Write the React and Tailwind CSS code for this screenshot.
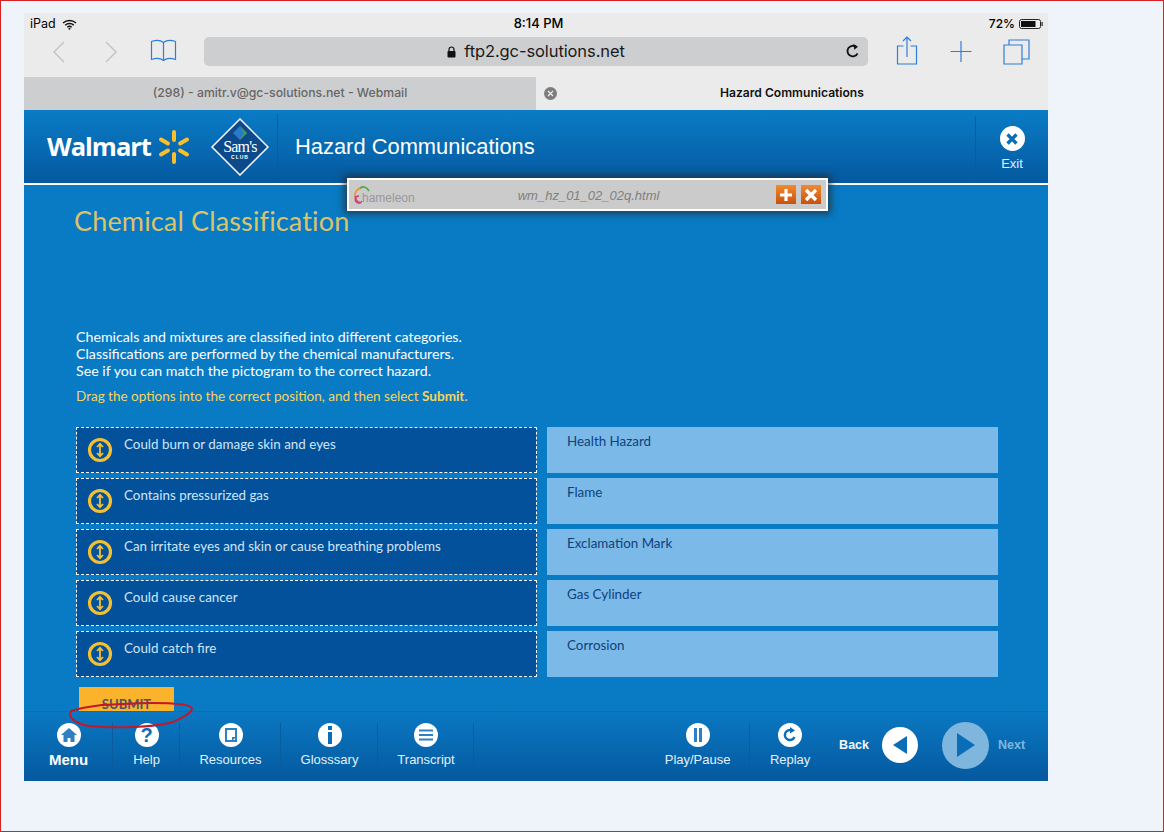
import React from 'react';

const rows = [
  ['Could burn or damage skin and eyes', 'Health Hazard'],
  ['Contains pressurized gas', 'Flame'],
  ['Can irritate eyes and skin or cause breathing problems', 'Exclamation Mark'],
  ['Could cause cancer', 'Gas Cylinder'],
  ['Could catch fire', 'Corrosion'],
];

function DragIcon() {
  return (
    <svg width="26" height="26" viewBox="0 0 26 26" className="shrink-0">
      <circle cx="13" cy="13" r="10.5" fill="none" stroke="#f4c033" strokeWidth="3.2" />
      <path d="M13 7.5v11M10 10l3-3.2 3 3.2M10 16l3 3.2 3-3.2" fill="none" stroke="#f4c033" strokeWidth="1.8" />
    </svg>
  );
}

function NavItem({ label, className, bold, children }) {
  return (
    <div className={`flex flex-col items-center border-r border-[#0a5c9f] h-[48px] pl-[1px] ${className}`}>
      <div className="h-[24px] w-[24px] rounded-full bg-white flex items-center justify-center">{children}</div>
      <span className={bold ? 'text-[15px] font-bold text-white mt-[3px] leading-[20px]' : 'text-[13px] text-[#e3f0fa] mt-[3px] leading-[20px]'}>{label}</span>
    </div>
  );
}

function Toolbar() {
  return (
    <div className="bg-[#ebebeb] h-[64px] relative text-black">
      <div className="flex items-center justify-between h-[21px] pt-[1px] pl-[6px] pr-[5px] text-[12.5px] font-['Inter',sans-serif]">
        <div className="flex items-center gap-[6px] w-[200px]">
          <span>iPad</span>
          <svg width="15" height="11" viewBox="0 0 15 11">
            <path d="M1 4a9.5 9.5 0 0 1 13 0M3.2 6.2a6.3 6.3 0 0 1 8.6 0M5.3 8.2a3.3 3.3 0 0 1 4.4 0" fill="none" stroke="#111" strokeWidth="1.5" />
            <circle cx="7.5" cy="9.8" r="1" fill="#111" />
          </svg>
        </div>
        <span className="font-medium text-[13px] pl-[4px]">8:14 PM</span>
        <div className="flex items-center justify-end gap-[4px] w-[200px]">
          <span className="font-medium text-[12px]">72%</span>
          <svg width="24" height="10" viewBox="0 0 24 10">
            <rect x="0.5" y="0.5" width="21" height="9" rx="2" fill="none" stroke="#222" />
            <rect x="2" y="2" width="14.5" height="6" fill="#111" />
            <rect x="22.5" y="3" width="1.2" height="4" fill="#222" />
          </svg>
        </div>
      </div>
      <div className="flex items-center h-[30px] mt-[3px]">
        <svg width="180" height="30" viewBox="0 0 180 30" className="shrink-0">
          <path d="M40 5 30 15l10 10" fill="none" stroke="#c2c2c4" strokeWidth="1.4" />
          <path d="M82 5l10 10-10 10" fill="none" stroke="#c2c2c4" strokeWidth="1.4" />
          <path d="M140 6c-3-2.500-8-2.500-12-1v18c4-1.500 9-1.500 12 1 3-2.500 8-2.500 12-1V5c-4-1.500-9-1.500-12 1zM140 6v18" transform="translate(-.5 -.5)" fill="none" stroke="#2f7fd6" strokeWidth="1.2" />
        </svg>
        <div className="w-[664px] h-[29px] -mt-[1px] rounded-[5px] bg-[#cdced0] flex items-center relative">
          <div className="flex-1 flex items-center justify-center gap-[8px] text-[16.5px] text-[#1a1a1a] font-['Inter',sans-serif] tracking-[-0.1px]">
            <svg width="9" height="12" viewBox="0 0 9 12">
              <path d="M2 5V3.500a2.500 2.500 0 0 1 5 0V5" fill="none" stroke="#111" strokeWidth="1.200" />
              <rect x="0.500" y="5" width="8" height="6.500" rx="1" fill="#111" />
            </svg>
            <span>ftp2.gc-solutions.net</span>
          </div>
          <svg width="16" height="16" viewBox="0 0 16 16" className="absolute right-[7px] top-[6px]">
            <path d="M12.500 10.500A5.300 5.300 0 1 1 11 3.800" fill="none" stroke="#111" strokeWidth="1.800" />
            <path d="M8.500 1l4.500 2.800-3.800 3z" fill="#111" />
          </svg>
        </div>
        <svg width="180" height="36" viewBox="0 0 180 36" className="shrink-0 -mt-[2px]">
          <g fill="none" stroke="#2f7fd6" strokeWidth="1.200">
            <path d="M35.500 13H29.500v18h19V13H42.500M39 24V4M35 8l4-4 4 4" />
            <path d="M93 8v21M82.500 18.500h21" />
            <path d="M136 12.500h18v19h-18zM141 12.500V7.500h20v19h-7" transform="translate(0 -.5)" />
          </g>
        </svg>
      </div>
    </div>
  );
}

function Tabs() {
  return (
    <div className="flex h-[33px] font-['Inter',sans-serif]">
      <div className="w-[512px] bg-[#cdced0] flex items-center justify-center text-[12.25px] text-[#666] font-medium">
        (298) - amitr.v@gc-solutions.net - Webmail
      </div>
      <div className="flex-1 bg-[#ebebeb] flex items-center">
        <div className="ml-[8px] w-[13px] h-[13px] rounded-full bg-[#7d7d7d] flex items-center justify-center">
          <svg width="7" height="7" viewBox="0 0 7 7"><path d="M1 1l5 5M6 1 1 6" stroke="#eee" strokeWidth="1.200" /></svg>
        </div>
        <span className="flex-1 text-center text-[12.1px] font-semibold text-[#111] -ml-[21px]">Hazard Communications</span>
      </div>
    </div>
  );
}

function Header() {
  return (
    <div className="h-[75px] bg-gradient-to-b from-[#0a7cc6] to-[#05599f] border-b-2 border-white flex text-white">
      <div className="flex flex-1 items-center pb-[5px]">
        <div className="flex items-center w-[254px] h-[66px] border-r border-[#0a5c9f] mt-[6px] pl-[23px]">
          <span className="text-[25.5px] font-bold tracking-[-1px] font-['Open_Sans',sans-serif] leading-none">Walmart</span>
          <svg width="36" height="36" viewBox="0 0 36 36" className="ml-[5px] shrink-0">
            <g fill="#fbbf2e">
              <rect x="16" y="1" width="4" height="12" rx="2" />
              <rect x="16" y="23" width="4" height="12" rx="2" />
              <rect x="16" y="1" width="4" height="12" rx="2" transform="rotate(60 18 18)" />
              <rect x="16" y="1" width="4" height="12" rx="2" transform="rotate(120 18 18)" />
              <rect x="16" y="1" width="4" height="12" rx="2" transform="rotate(240 18 18)" />
              <rect x="16" y="1" width="4" height="12" rx="2" transform="rotate(300 18 18)" />
            </g>
          </svg>
          <svg width="58" height="58" viewBox="0 0 58 58" className="ml-[19px] shrink-0">
            <path d="M29 1 57 29 29 57 1 29z" fill="#0c4a8c" stroke="#fff" strokeWidth="1.500" />
            <path d="M29 8l7 7-7 7-7-7z" fill="#2a78c8" />
            <path d="M29 8l7 7-7 7 3.500-7z" fill="#3f9a52" />
            <text x="29" y="34" textAnchor="middle" fill="#fff" fontSize="16" fontFamily="Liberation Serif, serif" letterSpacing="-0.8">Sam's</text>
            <text x="29" y="41" textAnchor="middle" fill="#fff" fontSize="5" fontWeight="700" fontFamily="Liberation Sans, sans-serif" letterSpacing="1">CLUB</text>
          </svg>
        </div>
        <span className="ml-[17px] text-[21.9px] font-['Liberation_Sans',sans-serif] mt-[6px]">Hazard Communications</span>
      </div>
      <div className="w-[73px] h-[66px] mt-[6px] border-l border-[#0a5c9f] flex flex-col items-center pt-[10px] font-['Liberation_Sans',sans-serif]">
        <div className="w-[25px] h-[25px] rounded-full bg-white flex items-center justify-center">
          <svg width="14" height="14" viewBox="0 0 14 14"><path d="M2.500 2.500l9 9M11.500 2.500l-9 9" stroke="#0a6db8" strokeWidth="3.200" /></svg>
        </div>
        <span className="text-[13px] mt-[3px] text-[#e3f0fa]">Exit</span>
      </div>
    </div>
  );
}

function Popup() {
  return (
    <div className="absolute left-[346px] top-[177px] w-[481px] h-[33px] bg-[#cbcbcb] border-2 border-white shadow-[0_0_7px_3px_rgba(40,40,40,0.7)] flex items-center font-['Liberation_Sans',sans-serif]">
      <svg width="20" height="22" viewBox="0 0 20 22" className="ml-[3px] shrink-0">
        <path d="M9 4a7.500 7.500 0 0 0-6 8" fill="none" stroke="#e89a3a" strokeWidth="1.800" />
        <path d="M3 12a8 8 0 0 0 6 7" fill="none" stroke="#e0604a" strokeWidth="1.800" />
        <path d="M8 4c3-2 7-1 9 3" fill="none" stroke="#57a85a" strokeWidth="1.800" />
        <path d="M10 17a3.500 3.500 0 1 1-3-5" fill="none" stroke="#c4388a" strokeWidth="1.300" />
      </svg>
      <span className="text-[12px] text-[#999] -ml-[10px] mt-[6px]">hameleon</span>
      <span className="ml-[103px] text-[13px] italic text-[#808080] mt-[3px]">wm_hz_01_02_02q.html</span>
      <div className="ml-auto mr-[5px] flex gap-[5px]">
        <div className="w-[20px] h-[19px] bg-gradient-to-b from-[#f28a2c] to-[#c8500f] flex items-center justify-center">
          <svg width="14" height="14" viewBox="0 0 14 14"><path d="M7 1v12M1 7h12" stroke="#fff" strokeWidth="3.200" /></svg>
        </div>
        <div className="w-[20px] h-[19px] bg-gradient-to-b from-[#f28a2c] to-[#c8500f] flex items-center justify-center">
          <svg width="14" height="14" viewBox="0 0 14 14"><path d="M2 2l10 10M12 2 2 12" stroke="#fff" strokeWidth="3.400" /></svg>
        </div>
      </div>
    </div>
  );
}

function Content() {
  return (
    <div className="h-[526px] bg-[#087bc4] pl-[52px] pr-[50px] font-['Lato',sans-serif] flex flex-col">
      <h1 className="mt-[18px] h-[36px] text-[#dcc36a] text-[27px] leading-[36px] -ml-[2px] tracking-[0.15px]">Chemical Classification</h1>
      <div className="mt-[89px] text-white text-[14.2px] leading-[17px]">
        <p>Chemicals and mixtures are classified into different categories.</p>
        <p>Classifications are performed by the chemical manufacturers.</p>
        <p>See if you can match the pictogram to the correct hazard.</p>
        <p className="mt-[9px] text-[13.5px] text-[#f4d35e]">Drag the options into the correct position, and then select <b>Submit</b>.</p>
      </div>
      <div className="mt-[22px] flex flex-col gap-[5px] text-[13.4px]">
        {rows.map(([left, right]) => (
          <div key={left} className="flex gap-[10px] h-[46px]">
            <div className="w-[461px] bg-[#03519b] border border-dashed border-white flex pl-[10px] pt-[8px] text-[#cfe6f8]">
              <div className="mt-[1px]"><DragIcon /></div>
              <span className="ml-[11px] leading-[17px]">{left}</span>
            </div>
            <div className="flex-1 bg-[#7ab9e8] pl-[20px] pt-[6px] text-[#10427a] leading-[17px]">{right}</div>
          </div>
        ))}
      </div>
      <div className="mt-[10px] ml-[3px] w-[95px] h-[24px] pt-[10px] bg-[#fbb32c] text-[#4a5568] text-[13px] font-bold text-center leading-[14px]">SUBMIT</div>
    </div>
  );
}

function Footer() {
  return (
    <div className="h-[70px] bg-gradient-to-b from-[#0a78c2] to-[#05599f] flex items-start pt-[11px] font-['Liberation_Sans',sans-serif] border-t border-[#0a6fb6]">
      <NavItem label="Menu" bold className="w-[89px]">
        <svg width="16" height="14" viewBox="0 0 16 14"><path d="M8 0 0 7h2.500v7h4v-4h3v4h4V7H16z" fill="#2f7fc2" /></svg>
      </NavItem>
      <NavItem label="Help" className="w-[67px]">
        <span className="text-[#0a6db8] text-[20px] font-bold leading-none">?</span>
      </NavItem>
      <NavItem label="Resources" className="w-[101px]">
        <svg width="12" height="14" viewBox="0 0 12 14"><path d="M1 1h10v12H1z" fill="none" stroke="#2f7fc2" strokeWidth="2" /><path d="M7 13v-4h4z" fill="#2f7fc2" /></svg>
      </NavItem>
      <NavItem label="Glosssary" className="w-[97px]">
        <svg width="6" height="18" viewBox="0 0 6 18"><rect x="1" y="0" width="4" height="4" fill="#0a6db8" /><rect x="1" y="6" width="4" height="12" fill="#0a6db8" /></svg>
      </NavItem>
      <NavItem label="Transcript" className="w-[96px]">
        <svg width="14" height="12" viewBox="0 0 14 12"><path d="M0 1.500h14M0 6h14M0 10.500h14" stroke="#2f7fc2" strokeWidth="2.200" /></svg>
      </NavItem>
      <div className="flex-1" />
      <div className="flex flex-col items-center w-[98px] pr-[6px] h-[48px] border-r border-[#0a5c9f]">
        <div className="h-[24px] w-[24px] rounded-full bg-white flex items-center justify-center gap-[2px]">
          <span className="w-[3px] h-[14px] bg-[#2f7fc2]" />
          <span className="w-[3px] h-[14px] bg-[#2f7fc2]" />
        </div>
        <span className="text-[13px] text-[#e3f0fa] mt-[3px] leading-[20px]">Play/Pause</span>
      </div>
      <div className="flex flex-col items-center w-[86px] pr-[6px]">
        <div className="h-[24px] w-[24px] rounded-full bg-white flex items-center justify-center">
          <svg width="16" height="16" viewBox="0 0 16 16"><path d="M12.500 10A5 5 0 1 1 10 3.500" fill="none" stroke="#0a6db8" strokeWidth="2.400" /><path d="M8 0l5 3.500-5 3z" fill="#0a6db8" /></svg>
        </div>
        <span className="text-[13px] text-[#e3f0fa] mt-[3px] leading-[20px]">Replay</span>
      </div>
      <div className="flex items-center h-[44px] pl-[3px] gap-[13px] text-[12.5px] font-bold">
        <span className="text-[#f2f8fd]">Back</span>
        <div className="w-[36px] h-[36px] rounded-full bg-white flex items-center justify-center">
          <svg width="15" height="18" viewBox="0 0 15 18"><path d="M14 0v18L0 9z" fill="#0a6db8" /></svg>
        </div>
        <div className="w-[47px] h-[47px] rounded-full bg-[#7fb6dd] flex items-center justify-center ml-[11px]">
          <svg width="18" height="24" viewBox="0 0 18 24"><path d="M0 0v24l18-12z" fill="#0a6db8" /></svg>
        </div>
        <span className="text-[#7fb6dd] -ml-[4px] w-[50px]">Next</span>
      </div>
    </div>
  );
}

export default function App() {
  return (
    <div className="relative w-[1164px] h-[832px] bg-[#eff4fb] border border-[#d92027] overflow-hidden pl-[23px] pt-[12px]">
      <div className="w-[1024px]">
        <Toolbar />
        <Tabs />
        <Header />
        <Content />
        <Footer />
      </div>
      <Popup />
      <svg width="130" height="36" viewBox="0 0 130 36" className="absolute left-[68px] top-[698px]">
        <path d="M3 12C15 8 25 7 34 6C55 5 70 4 84 4C100 4 120 5 123 9C124 14 110 20 104 23C85 29 40 29 20 27C8 25 1 20 1 15C1 13 2 12 4 11" fill="none" stroke="#c2182b" strokeWidth="2" />
      </svg>
    </div>
  );
}
